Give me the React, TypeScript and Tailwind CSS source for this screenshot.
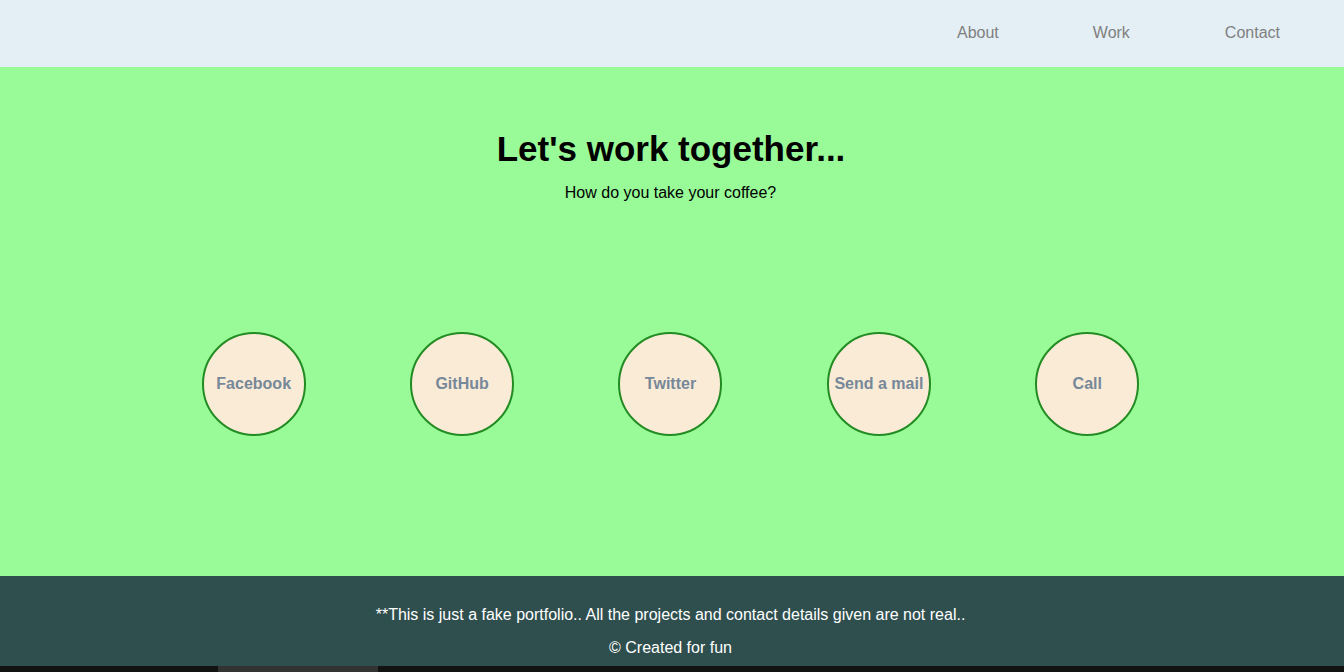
const links = ["About", "Work", "Contact"];
const contacts = ["Facebook", "GitHub", "Twitter", "Send a mail", "Call"];

export default function App() {
  return (
    <div className="min-h-screen flex flex-col font-['Liberation_Sans',Arial,sans-serif]">
      {/* Nav */}
      <nav className="h-[67px] bg-[#e4eff5] flex items-center justify-end pr-[64px] pb-[2px]">
        <a href="#" className="text-[16px] text-[#808080] mr-[94px]">{links[0]}</a>
        <a href="#" className="text-[16px] text-[#808080] mr-[95px]">{links[1]}</a>
        <a href="#" className="text-[16px] text-[#808080]">{links[2]}</a>
      </nav>

      {/* Contact */}
      <section className="h-[509px] bg-[#98fb98] flex flex-col items-center">
        <h1 className="mt-[60px] text-[35px] leading-[44px] font-bold text-black -ml-[2px]">
          Let's work together...
        </h1>
        <p className="mt-[12px] text-[16px] leading-[20px] text-black -ml-[3px]">
          How do you take your coffee?
        </p>
        <div className="mt-[129px] w-[1042px] grid grid-cols-5 -ml-[3px]">
          {contacts.map((c) => (
            <div key={c} className="flex justify-center">
              <a
                href="#"
                className="w-[104px] h-[104px] rounded-full border-2 border-[#228b22] bg-[#faebd7] flex items-center justify-center text-[16px] font-bold text-[#778899] whitespace-nowrap"
              >
                {c}
              </a>
            </div>
          ))}
        </div>
      </section>

      {/* Footer */}
      <footer className="h-[90px] bg-[#2f4f4f] flex flex-col items-center text-white text-[16px] leading-[20px]">
        <p className="mt-[29px] -ml-[3px]">
          **This is just a fake portfolio.. All the projects and contact details given are not real..
        </p>
        <p className="mt-[13px] -ml-[3px]">© Created for fun</p>
      </footer>
      <div className="h-[6px] bg-[#121212] flex">
        <div className="ml-[218px] w-[160px] bg-[#333333]" />
      </div>
    </div>
  );
}
